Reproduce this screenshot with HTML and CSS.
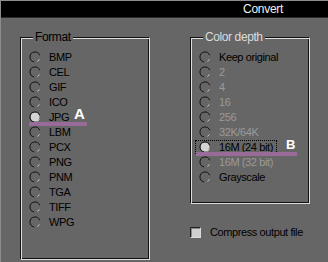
FILE: index.html
```html
<!DOCTYPE html>
<html lang="en">
<head>
  <meta charset="UTF-8">
  <title>Convert</title>
  <link rel="stylesheet" href="styles.css">
</head>
<body>
  <svg class="defs" width="0" height="0">
    <defs>
      <g id="radio">
        <path d="M5.1 10.9 A5 5 0 1 1 10.7 4.3" fill="none" stroke="#111" stroke-width="1"/>
        <path d="M10.3 8.5 A5 5 0 0 1 8.5 10.3" fill="none" stroke="#ddd" stroke-width="1"/>
      </g>
      <g id="radio-on">
        <circle cx="6" cy="6" r="4.5" fill="#d4d4d4"/>
        <path d="M5.1 10.9 A5 5 0 1 1 10.7 4.3" fill="none" stroke="#111" stroke-width="1"/>
        <path d="M10.3 8.5 A5 5 0 0 1 8.5 10.3" fill="none" stroke="#ddd" stroke-width="1"/>
      </g>
    </defs>
  </svg>

  <div class="window">
    <div class="titlebar"><span class="title">Convert</span></div>

    <div class="content">
      <fieldset class="group format">
        <legend>Format</legend>
        <div class="option"><svg class="radio" viewBox="0 0 12 12"><use href="#radio"/></svg><span>BMP</span></div>
        <div class="option"><svg class="radio" viewBox="0 0 12 12"><use href="#radio"/></svg><span>CEL</span></div>
        <div class="option"><svg class="radio" viewBox="0 0 12 12"><use href="#radio"/></svg><span>GIF</span></div>
        <div class="option"><svg class="radio" viewBox="0 0 12 12"><use href="#radio"/></svg><span>ICO</span></div>
        <div class="option marked">
          <svg class="radio" viewBox="0 0 12 12"><use href="#radio-on"/></svg><span>JPG</span>
          <span class="note note-a">A</span>
          <span class="mark mark-a"></span>
        </div>
        <div class="option"><svg class="radio" viewBox="0 0 12 12"><use href="#radio"/></svg><span>LBM</span></div>
        <div class="option"><svg class="radio" viewBox="0 0 12 12"><use href="#radio"/></svg><span>PCX</span></div>
        <div class="option"><svg class="radio" viewBox="0 0 12 12"><use href="#radio"/></svg><span>PNG</span></div>
        <div class="option"><svg class="radio" viewBox="0 0 12 12"><use href="#radio"/></svg><span>PNM</span></div>
        <div class="option"><svg class="radio" viewBox="0 0 12 12"><use href="#radio"/></svg><span>TGA</span></div>
        <div class="option"><svg class="radio" viewBox="0 0 12 12"><use href="#radio"/></svg><span>TIFF</span></div>
        <div class="option"><svg class="radio" viewBox="0 0 12 12"><use href="#radio"/></svg><span>WPG</span></div>
      </fieldset>

      <div class="right-col">
        <fieldset class="group depth">
          <legend>Color depth</legend>
          <div class="option"><svg class="radio" viewBox="0 0 12 12"><use href="#radio"/></svg><span>Keep original</span></div>
          <div class="option disabled"><svg class="radio" viewBox="0 0 12 12"><use href="#radio"/></svg><span>2</span></div>
          <div class="option disabled"><svg class="radio" viewBox="0 0 12 12"><use href="#radio"/></svg><span>4</span></div>
          <div class="option disabled"><svg class="radio" viewBox="0 0 12 12"><use href="#radio"/></svg><span>16</span></div>
          <div class="option disabled"><svg class="radio" viewBox="0 0 12 12"><use href="#radio"/></svg><span>256</span></div>
          <div class="option disabled"><svg class="radio" viewBox="0 0 12 12"><use href="#radio"/></svg><span>32K/64K</span></div>
          <div class="option marked">
            <span class="focus"><svg class="radio" viewBox="0 0 12 12"><use href="#radio-on"/></svg><span>16M (24 bit)</span></span>
            <span class="note note-b">B</span>
            <span class="mark mark-b"></span>
          </div>
          <div class="option disabled"><svg class="radio" viewBox="0 0 12 12"><use href="#radio"/></svg><span>16M (32 bit)</span></div>
          <div class="option"><svg class="radio" viewBox="0 0 12 12"><use href="#radio"/></svg><span>Grayscale</span></div>
        </fieldset>

        <label class="check"><span class="box"></span><span>Compress output file</span></label>
      </div>
    </div>
  </div>
</body>
</html>
```

FILE: styles.css
```css
html, body {
  margin: 0;
  padding: 0;
  background-color: #666666;
  color: #000;
  font-family: "Liberation Sans", Arial, sans-serif;
  font-size: 11px;
  letter-spacing: -0.4px;
  overflow: hidden;
}
.defs {
  position: absolute;
  width: 0;
  height: 0;
}
.window {
  height: 262px;
  box-sizing: border-box;
  border-left: 1px solid #8c8c8c;
  border-top: 1px solid #8c8c8c;
}
.titlebar {
  height: 16px;
  background-color: #000;
  border-bottom: 1px solid #2a2a2a;
  display: flex;
  justify-content: flex-end;
  align-items: center;
  padding-right: 45px;
}
.title {
  color: #f0f0f0;
  font-size: 12px;
  letter-spacing: -0.3px;
}
.content {
  display: flex;
  gap: 40px;
  padding: 12px 0 0 19px;
}
fieldset.group {
  margin: 0;
  padding: 5px 0 0 8px;
  box-sizing: border-box;
  border: 1px solid;
  border-color: #111 #dcdcdc #dcdcdc #111;
  box-shadow: inset 1px 1px #dcdcdc, inset -1px -1px #111;
}
fieldset.group legend {
  margin-left: 4px;
  padding: 0 2px;
  line-height: 14px;
  font-size: 12px;
  letter-spacing: -0.4px;
  background-color: #666666;
}
fieldset.format {
  width: 130px;
  padding-bottom: 30px;
}
fieldset.depth {
  width: 120px;
  padding-bottom: 19px;
}
fieldset.depth legend {
  color: #dcdcdc;
}
.option {
  display: flex;
  align-items: center;
  height: 15px;
  gap: 8px;
}
.option.disabled {
  color: #9a9a9a;
}
.option.marked {
  position: relative;
}
.radio {
  width: 12px;
  height: 12px;
  flex: none;
}
.focus {
  display: flex;
  align-items: center;
  gap: 8px;
  margin-left: -4px;
  padding: 0 3px 0 3px;
  height: 12px;
  border: 1px dotted #000;
}
.note {
  position: absolute;
  color: #fff;
  font-weight: bold;
  letter-spacing: 0;
}
.note-a {
  left: 45px;
  top: -4px;
  font-size: 15px;
}
.note-b {
  left: 87px;
  top: -2px;
  font-size: 13px;
}
.mark {
  position: absolute;
  height: 4px;
  background-color: #996b99;
}
.mark-a {
  left: 0;
  top: 13px;
  width: 58px;
}
.mark-b {
  left: -3px;
  top: 13px;
  width: 101px;
}
.check {
  display: flex;
  align-items: center;
  gap: 9px;
  margin-top: 22px;
}
.box {
  width: 9px;
  height: 9px;
  border: 1px solid;
  border-color: #222 #dcdcdc #dcdcdc #222;
  background-color: #cfcfcf;
  box-shadow: inset 1px 1px #8a8a8a;
}
```
